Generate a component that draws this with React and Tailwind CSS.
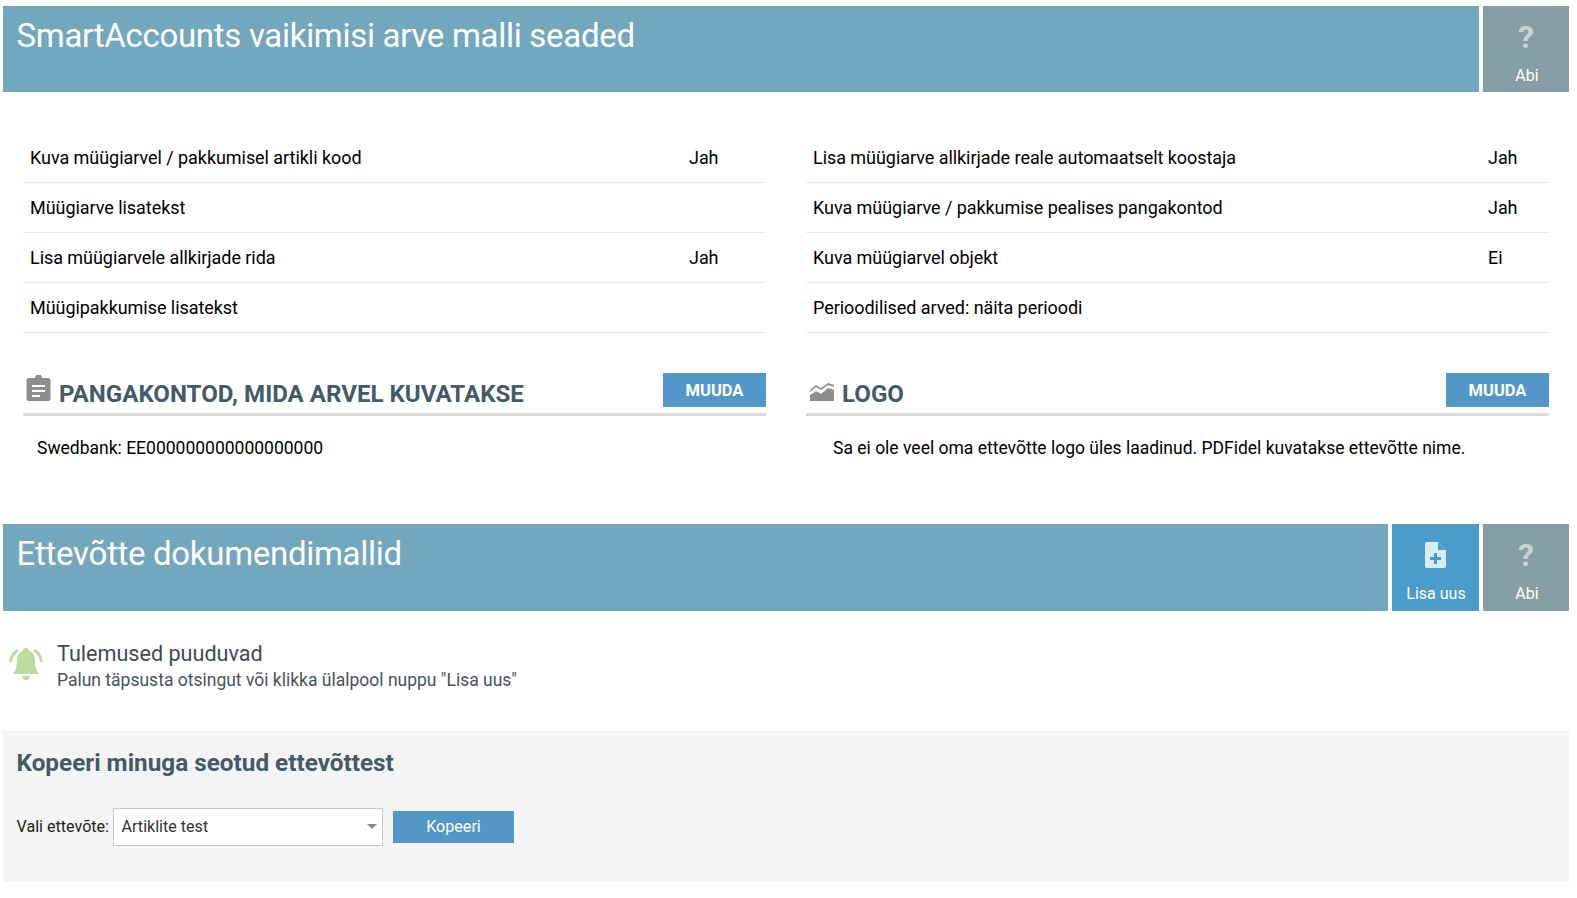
const Help = () => (
  <div className="w-[86px] shrink-0 bg-[#889ea6] flex flex-col items-center text-white">
    <span className="mt-[13px] h-[36px] text-[32px] leading-[36px] font-bold text-[#c9d3d7]">?</span>
    <span className="mt-[11px] pl-[2px] text-[16px] leading-[20px]">Abi</span>
  </div>
);

const PageHeader = ({ title, heightClass, children }) => (
  <div className={`flex gap-[4px] w-[1566px] ml-[3px] ${heightClass}`}>
    <div className="flex-1 bg-[#73a7bd] text-white text-[33px] tracking-[-0.3px] leading-[40px] pl-[13.500px] pt-[10px]">{title}</div>
    {children}
    <Help />
  </div>
);

const Row = ({ label, value, valueClass }) => (
  <div className="flex items-center h-[50px] border-b border-[#eaeaea] pl-[7px] text-[18px] tracking-[-0.05px] text-black">
    <span className="flex-1">{label}</span>
    <span className={valueClass}>{value}</span>
  </div>
);

const SectionHead = ({ icon, title, extraClass }) => (
  <div className={`flex items-end h-[43px] border-b-[3px] border-[#dcdcdc] ${extraClass}`}>
    <div className="flex items-center h-[38px] flex-1">
      {icon}
      <h3 className="text-[24.100px] leading-[30px] font-bold text-[#435a68]">{title}</h3>
    </div>
    <button className="self-start w-[103px] h-[34px] pt-[2px] bg-[#5397c7] text-white text-[16.5px] font-bold">MUUDA</button>
  </div>
);

const left = [
  ["Kuva müügiarvel / pakkumisel artikli kood", "Jah"],
  ["Müügiarve lisatekst", ""],
  ["Lisa müügiarvele allkirjade rida", "Jah"],
  ["Müügipakkumise lisatekst", ""],
];

const right = [
  ["Lisa müügiarve allkirjade reale automaatselt koostaja", "Jah"],
  ["Kuva müügiarve / pakkumise pealises pangakontod", "Jah"],
  ["Kuva müügiarvel objekt", "Ei"],
  ["Perioodilised arved: näita perioodi", ""],
];

export default function App() {
  return (
    <div className="w-[1577px] h-[898px] bg-white pt-[6px] font-['Roboto',sans-serif] overflow-hidden">
      <PageHeader title="SmartAccounts vaikimisi arve malli seaded" heightClass="h-[86px]" />

      <div className="flex gap-[41px] pl-[23px] mt-[41px] w-[1549px]">
        <div className="w-[742px]">
          {left.map(([l, v]) => (
            <Row key={l} label={l} value={v} valueClass="w-[76px]" />
          ))}
          <div className="mt-[40px]">
            <SectionHead
              title="PANGAKONTOD, MIDA ARVEL KUVATAKSE"
              extraClass="-mr-[1px]"
              icon={
                <svg viewBox="0 0 25 26" className="w-[25px] h-[26px] ml-[3px] mr-[8px] mb-[12px] fill-[#8d8d8d]">
                  <path d="M3 3h6a3.5 3.5 0 0 1 7 0h6a2.500 2.500 0 0 1 2.500 2.500v18a2.500 2.500 0 0 1-2.500 2.500H3a2.500 2.500 0 0 1-2.500-2.500v-18A2.500 2.500 0 0 1 3 3z" />
                  <path d="M6 10h13v2H6zM6 15h13v2H6zM6 20h8v2H6z" fill="#fff" />
                </svg>
              }
            />
            <p className="pl-[14px] pt-[19px] text-[17.5px] leading-[26px] text-black">Swedbank: EE000000000000000000</p>
          </div>
        </div>

        <div className="w-[743px]">
          {right.map(([l, v]) => (
            <Row key={l} label={l} value={v} valueClass="w-[61px]" />
          ))}
          <div className="mt-[40px]">
            <SectionHead
              title="LOGO"
              icon={
                <svg viewBox="0 0 24 18" className="w-[24px] h-[18px] ml-[4px] mr-[8px] mb-[4px] fill-[#8d8d8d]">
                  <path d="M0 18v-6l6-4 5 3 7-6 6 2v11z" />
                  <path d="M0 7l6-5 5 3 7-5 6 2v2l-6-2-7 5-5-3-6 5z" />
                </svg>
              }
            />
            <p className="pl-[27px] pt-[19px] text-[17.5px] leading-[26px] text-black">
              Sa ei ole veel oma ettevõtte logo üles laadinud. PDFidel kuvatakse ettevõtte nime.
            </p>
          </div>
        </div>
      </div>

      <div className="mt-[63px]">
        <PageHeader title="Ettevõtte dokumendimallid" heightClass="h-[87px]">
          <div className="w-[87px] shrink-0 bg-[#4b9cc8] flex flex-col items-center text-white">
            <svg viewBox="0 0 21 26" className="w-[21px] h-[26px] mt-[18px] fill-[#dcecf5]">
              <path d="M2 0h11l8 8v16a2 2 0 0 1-2 2H2a2 2 0 0 1-2-2V2a2 2 0 0 1 2-2z" />
              <path d="M13 0l8 8h-8z" fill="#4b9cc8" />
              <path d="M9 11h3v4h4v3h-4v4H9v-4H5v-3h4z" fill="#4b9cc8" />
            </svg>
            <span className="mt-[16px] pl-[1px] text-[16px] leading-[20px]">Lisa uus</span>
          </div>
        </PageHeader>
      </div>

      <div className="flex h-[120px] pl-[9px] pt-[29px]">
        <svg viewBox="0 0 34 34" className="w-[34px] h-[34px] mt-[7px] fill-[#bddba0]">
          <path d="M17 1a3 3 0 0 1 3 3c5 1 6 6 6 10 0 5 1 9 4 13H4c3-4 4-8 4-13 0-4 1-9 6-10a3 3 0 0 1 3-3z" />
          <path d="M13 29h8a4 4 0 0 1-8 0z" />
          <path d="M9 3C4 6 2 10 1.500 15" fill="none" stroke="#bddba0" strokeWidth="3" />
          <path d="M25 3c5 3 7 7 7.500 12" fill="none" stroke="#bddba0" strokeWidth="3" />
        </svg>
        <div className="ml-[14px]">
          <div className="text-[21.6px] leading-[28px] text-[#3f4a52]">Tulemused puuduvad</div>
          <div className="text-[17.5px] leading-[24px] text-[#46535c]">Palun täpsusta otsingut või klikka ülalpool nuppu "Lisa uus"</div>
        </div>
      </div>

      <div className="ml-[3px] w-[1566px] h-[151px] bg-[#f4f4f4] pl-[13.500px]">
        <h3 className="pt-[17px] text-[24.300px] leading-[30px] font-bold text-[#435a68]">Kopeeri minuga seotud ettevõttest</h3>
        <div className="flex items-center mt-[30px] text-[16.100px]">
          <span className="pt-[1px] text-[#222]">Vali ettevõte:</span>
          <div className="relative ml-[3.500px] w-[270px] h-[38px] pt-[1px] bg-white border border-[#c8c8c8] flex items-center pl-[8px] text-[#333]">
            Artiklite test
            <span className="absolute right-[5px] top-[15px] border-x-[5px] border-x-transparent border-t-[5px] border-t-[#888]" />
          </div>
          <button className="ml-[10px] w-[121px] h-[32px] pt-[1px] pl-[1px] bg-[#5397c7] text-white">Kopeeri</button>
        </div>
      </div>
    </div>
  );
}
